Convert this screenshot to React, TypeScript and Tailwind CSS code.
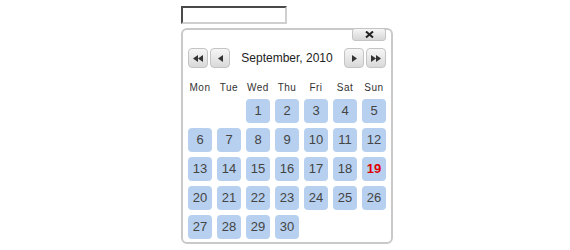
import React from "react";

const days = ["Mon", "Tue", "Wed", "Thu", "Fri", "Sat", "Sun"];

function NavButton({ dir, double }: { dir: "left" | "right"; double?: boolean }) {
  const tri = dir === "left" ? "M5 0 L0 3.5 L5 7 Z" : "M0 0 L5 3.5 L0 7 Z";
  return (
    <button className="w-[20px] h-[20px] flex items-center justify-center rounded-[4px] border border-[#c4c4c4] bg-gradient-to-b from-[#f6f6f6] to-[#d9d9d9]">
      <svg width={double ? 10 : 5} height="7" viewBox={double ? "0 0 10 7" : "0 0 5 7"}>
        <path d={tri} fill="#333" />
        {double && <path d={tri} fill="#333" transform="translate(5 0)" />}
      </svg>
    </button>
  );
}

export default function App() {
  // 1 Sep 2010 is a Wednesday -> two blank cells
  const cells: (number | null)[] = [null, null];
  for (let d = 1; d <= 30; d++) cells.push(d);

  return (
    <div className="w-[570px] h-[250px] bg-white pl-[181px] pt-[6px] font-['Liberation_Sans',Arial,sans-serif]">
      <input
        type="text"
        className="block w-[106px] h-[18px] border-2 border-t-[#4a4a4a] border-l-[#4a4a4a] border-b-[#cfcfcf] border-r-[#cfcfcf] bg-white outline-none"
      />

      <div className="mt-[4px] w-[212px] h-[216px] border-2 border-[#c9c9c9] rounded-[6px] bg-white">
        {/* close */}
        <div className="flex justify-end pr-[5px] -mt-[2px]">
          <button className="w-[34px] h-[13px] flex items-center justify-center rounded-[3px] border border-[#c4c4c4] bg-gradient-to-b from-[#f6f6f6] to-[#d6d6d6]">
            <svg width="9" height="7" viewBox="0 0 9 7">
              <path d="M1 0.5 L8 6.5 M8 0.5 L1 6.5" stroke="#222" strokeWidth="2" />
            </svg>
          </button>
        </div>

        {/* month navigation */}
        <div className="mt-[7px] px-[5px] flex items-center">
          <div className="flex gap-[2px]">
            <NavButton dir="left" double />
            <NavButton dir="left" />
          </div>
          <div className="flex-1 text-center text-[12px] text-[#222] leading-[20px]">September, 2010</div>
          <div className="flex gap-[2px]">
            <NavButton dir="right" />
            <NavButton dir="right" double />
          </div>
        </div>

        {/* week days */}
        <div className="mt-[10px] px-[5px] grid grid-cols-[repeat(7,24px)] gap-x-[5px] h-[20px]">
          {days.map((d) => (
            <div key={d} className="text-center text-[10px] tracking-[0.5px] leading-[20px] text-[#333]">
              {d}
            </div>
          ))}
        </div>

        {/* dates */}
        <div className="mt-[1px] px-[5px] grid grid-cols-[repeat(7,24px)] auto-rows-[24px] gap-x-[5px] gap-y-[5px]">
          {cells.map((d, i) =>
            d === null ? (
              <div key={i} />
            ) : (
              <div
                key={i}
                className={
                  d === 19
                    ? "rounded-[4px] bg-[#b7d0ef] flex items-center justify-center text-[13px] font-bold text-[#e00000]"
                    : "rounded-[4px] bg-[#b7d0ef] flex items-center justify-center text-[13px] text-[#444]"
                }
              >
                {d}
              </div>
            )
          )}
        </div>
      </div>
    </div>
  );
}
